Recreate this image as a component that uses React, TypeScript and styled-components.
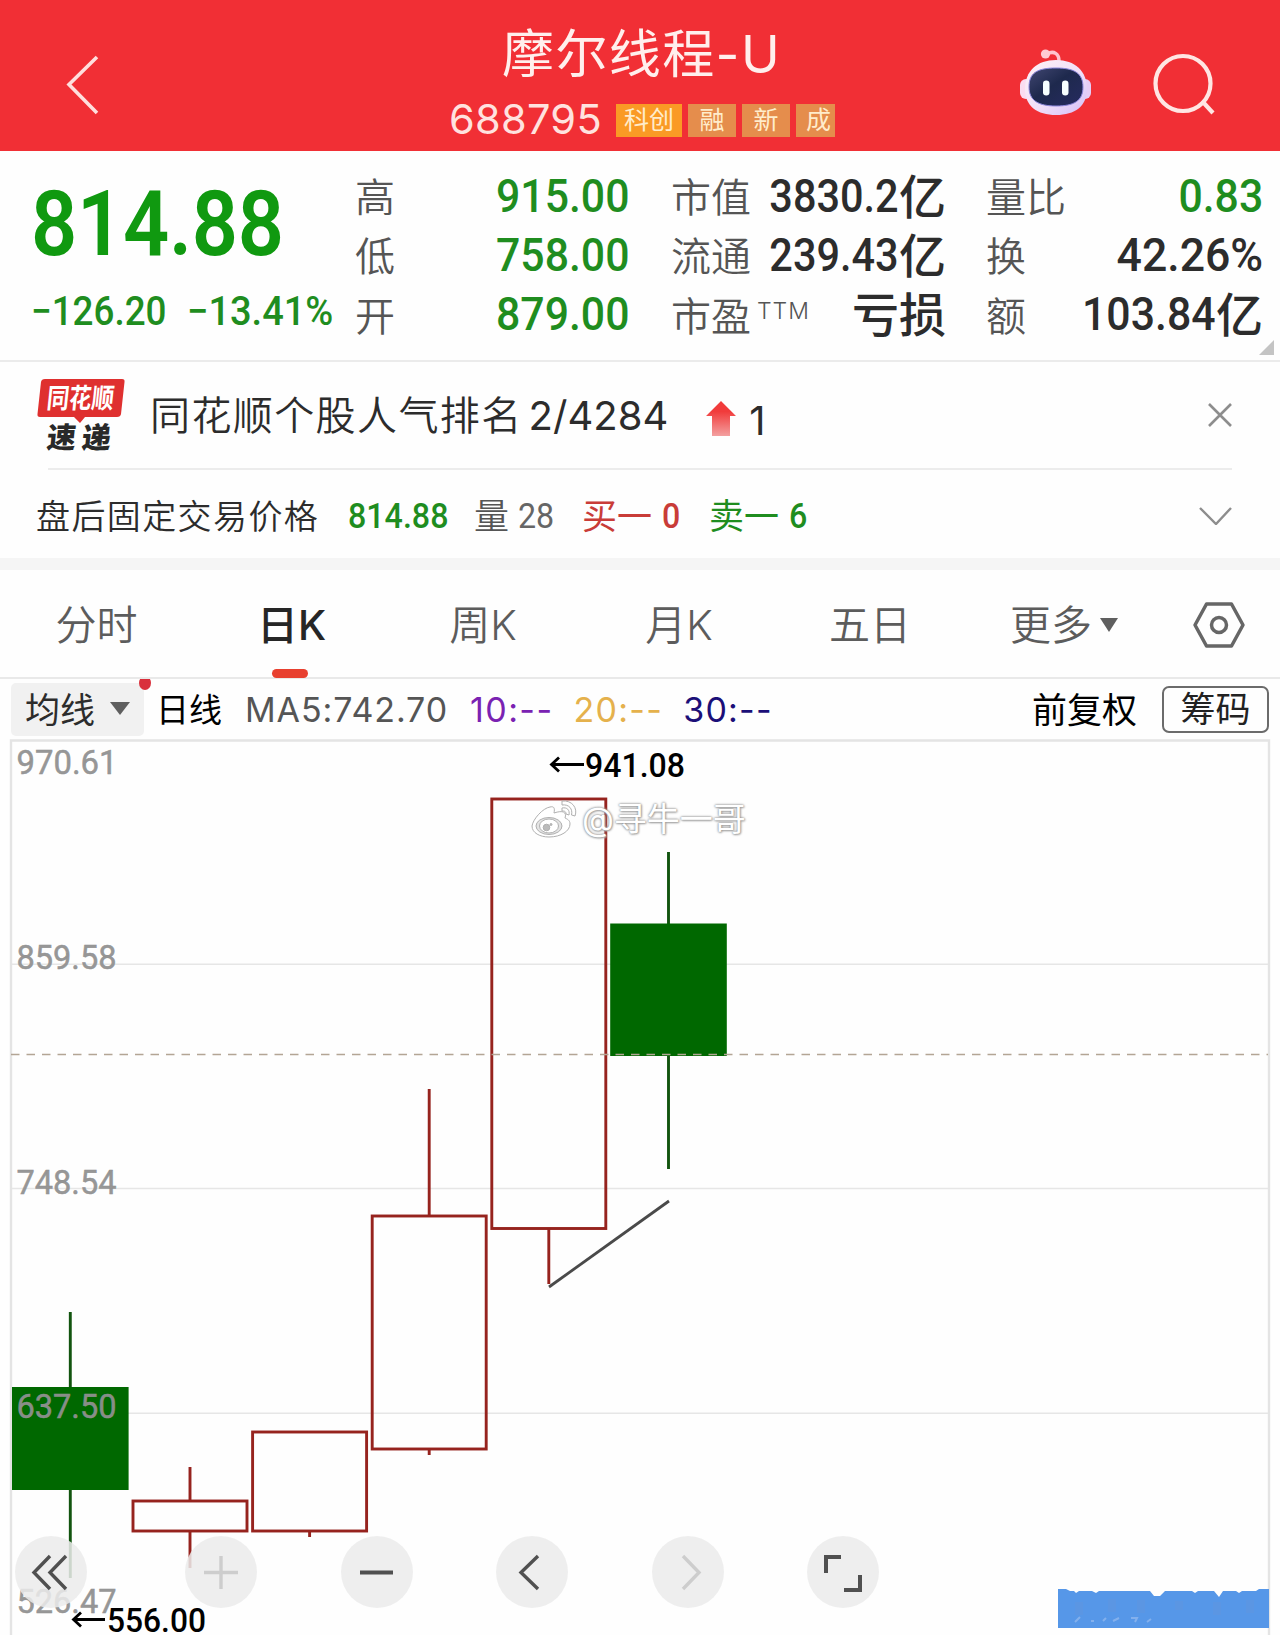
import React from "react";
import styled, { createGlobalStyle } from "styled-components";

const CJK = '"Noto Sans CJK SC", sans-serif';
const GREEN = "#1f8d1f";
const INK = "#2c2c2c";

const Global = createGlobalStyle`
  body { margin: 0; background: #fff; }
  * { box-sizing: border-box; }
`;

const Page = styled.main`
  width: 1280px;
  height: 1635px;
  overflow: hidden;
  display: flex;
  flex-direction: column;
  background: #fefefe;
  font-family: Inter, ${CJK};
  color: ${INK};
`;

const Text = styled.span<{
  $size: number; $color?: string; $weight?: number; $spacing?: number; $ml?: number; $dy?: number;
}>`
  flex: none;
  white-space: nowrap;
  font-size: ${(p) => p.$size}px;
  line-height: 1;
  font-weight: ${(p) => p.$weight ?? 400};
  color: ${(p) => p.$color ?? INK};
  letter-spacing: ${(p) => p.$spacing ?? 0}px;
  margin-left: ${(p) => p.$ml ?? 0}px;
  margin-top: ${(p) => p.$dy ?? 0}px;
`;

/* Narrow figures used for every price on the page. */
const Figure = styled(Text)<{ $squeeze?: number; $end?: boolean }>`
  font-family: Roboto, ${CJK};
  font-weight: ${(p) => p.$weight ?? 500};
  transform: scaleX(${(p) => p.$squeeze ?? 0.92});
  transform-origin: ${(p) => (p.$end ? "right" : "left")} center;
`;

/* ---------- header ---------- */
const Header = styled.header`
  flex: none;
  height: 151px;
  background: #f12f35;
  display: grid;
  grid-template-columns: 440px 404px 436px;
`;
const HeaderSide = styled.div`
  display: flex;
  padding: 48px 0 0 64px;
`;
const HeaderTools = styled.div`
  display: flex;
  align-items: flex-start;
  padding: 48px 0 0 174px;
  gap: 53px;
`;
const Heading = styled.div`
  display: flex;
  flex-direction: column;
  padding-top: 28px;
`;
const Title = styled.h1`
  margin: 0 0 0 62px;
  height: 54px;
  line-height: 54px;
  font-size: 52px;
  font-weight: 400;
  letter-spacing: 1.4px;
  color: #ffefed;
  white-space: nowrap;
`;
const CodeRow = styled.div`
  display: flex;
  align-items: center;
  height: 34px;
  margin-top: 21px;
  padding-left: 9px;
`;
const Code = styled.span`
  width: 167px;
  margin-top: -2px;
  font-size: 41.5px;
  line-height: 34px;
  font-weight: 400;
  letter-spacing: 0.3px;
  color: #ffe2df;
`;
const Tag = styled.span<{ $w: number; $bright?: boolean; $cut?: boolean }>`
  flex: none;
  width: ${(p) => p.$w}px;
  height: 33px;
  margin-right: 6px;
  padding-left: ${(p) => (p.$cut ? 10 : 0)}px;
  display: flex;
  align-items: center;
  justify-content: ${(p) => (p.$cut ? "flex-start" : "center")};
  font-size: 25px;
  line-height: 33px;
  color: #ffeccb;
  background: ${(p) => (p.$bright ? "#fa9a25" : "#e58d4c")};
`;

/* ---------- quote ---------- */
const Quote = styled.section`
  flex: none;
  position: relative;
  height: 211px;
  display: grid;
  grid-template-columns: 324px 275px 275px 277px;
  padding: 17px 0 0 31px;
  border-bottom: 2px solid #ebebeb;
`;
const PriceBlock = styled.div`
  display: flex;
  flex-direction: column;
`;
const ChangeRow = styled.div`
  display: flex;
  margin-top: 22px;
`;
const Change = styled.div<{ $w: number }>`
  width: ${(p) => p.$w}px;
  display: flex;
`;
const Stats = styled.div<{ $ml: number }>`
  display: flex;
  flex-direction: column;
  transform: translateX(${(p) => p.$ml}px);
`;
const Stat = styled.div`
  height: 59.3px;
  display: flex;
  align-items: center;
  justify-content: space-between;
`;
const Label = styled.span`
  font-size: 40px;
  line-height: 59px;
  font-weight: 350;
  color: #555;
  white-space: nowrap;
  sup { font-size: 23px; line-height: 0; vertical-align: 12px; margin-left: 6px; letter-spacing: 1px; }
`;
const Value = styled.span`
  display: flex;
  align-items: center;
`;
const Corner = styled.i`
  position: absolute;
  right: 6px;
  bottom: 5px;
  border-style: solid;
  border-width: 0 0 15px 15px;
  border-color: transparent transparent #c4c4c4 transparent;
`;

/* ---------- notices ---------- */
const Notice = styled.section`
  flex: none;
  height: 108px;
  display: flex;
  align-items: center;
  margin: 0 48px 0 37px;
  padding-bottom: 2px;
  position: relative;
  &::after {
    content: "";
    position: absolute;
    left: 11px; right: 0; bottom: 0;
    height: 2px;
    background: #ececec;
  }
`;
const Brand = styled.div`
  flex: none;
  width: 113px;
  height: 75px;
`;
const AfterHours = styled.section`
  flex: none;
  height: 88px;
  padding: 0 48px 0 36px;
  display: flex;
  align-items: center;
`;
const Cell = styled.div<{ $w: number; $gap?: number }>`
  flex: none;
  width: ${(p) => p.$w}px;
  display: flex;
  align-items: center;
  gap: ${(p) => p.$gap ?? 0}px;
  padding-top: 4px;
`;
const Push = styled.div`
  margin-left: auto;
  display: flex;
`;
const Band = styled.div`
  flex: none;
  height: 12px;
  background: #f5f5f5;
`;

/* ---------- tabs ---------- */
const Tabs = styled.nav`
  flex: none;
  height: 109px;
  display: grid;
  grid-template-columns: 193px 197px 186px 206px 176px 212px 98px;
  border-bottom: 2px solid #e9e9e9;
`;
const Tab = styled.div<{ $on?: boolean }>`
  position: relative;
  display: flex;
  align-items: center;
  justify-content: center;
  font-size: 41px;
  line-height: 1;
  padding-top: 4px;
  white-space: nowrap;
  font-weight: ${(p) => (p.$on ? 500 : 350)};
  color: ${(p) => (p.$on ? "#262626" : "#5c5c5c")};
  &::after {
    content: "";
    display: ${(p) => (p.$on ? "block" : "none")};
    position: absolute;
    left: 79px;
    bottom: -1px;
    width: 36px;
    height: 9px;
    border-radius: 5px;
    background: #e8402f;
  }
`;
const Caret = styled.i<{ $w: number; $h: number; $ml: number }>`
  width: 0;
  height: 0;
  margin-left: ${(p) => p.$ml}px;
  margin-top: -2px;
  border-left: ${(p) => p.$w / 2}px solid transparent;
  border-right: ${(p) => p.$w / 2}px solid transparent;
  border-top: ${(p) => p.$h}px solid #5f5f5f;
`;

/* ---------- indicator bar ---------- */
const Indicators = styled.section`
  flex: none;
  height: 60px;
  padding: 1px 11px 0 11px;
  display: flex;
  align-items: center;
  overflow: hidden;
`;
const Picker = styled.div`
  position: relative;
  width: 133px;
  height: 53px;
  border-radius: 5px;
  background: #f1f1f1;
  display: flex;
  align-items: center;
  padding-left: 14px;
  margin-right: 12px;
`;
const Dot = styled.i`
  position: absolute;
  right: -7px;
  top: -7px;
  width: 12px;
  height: 14px;
  border-radius: 50%;
  background: #d9303c;
`;
const Chips = styled.div`
  width: 107px;
  height: 47px;
  border: 2px solid #6b6b6b;
  border-radius: 7px;
  display: flex;
  align-items: center;
  justify-content: center;
  margin-left: 25px;
`;

/* ---------- chart ---------- */
const ChartArea = styled.section`
  position: relative;
  flex: none;
  height: 896px;
`;
const Controls = styled.div`
  position: absolute;
  left: 15px;
  top: 797px;
  display: flex;
  gap: 83.4px;
`;
const Control = styled.button<{ $first?: boolean }>`
  width: 72px;
  height: 72px;
  padding: 0;
  border: 0;
  border-radius: 50%;
  background: rgba(235, 235, 235, 0.86);
  margin-right: ${(p) => (p.$first ? 15 : 0)}px;
  svg { display: block; }
`;
const Watermark = styled.div`
  position: absolute;
  left: 531px;
  top: 60px;
  height: 40px;
  display: flex;
  align-items: center;
  gap: 4px;
  font-size: 33px;
  line-height: 40px;
  color: #fff;
  white-space: nowrap;
  text-shadow: 0 0 2px #888, 0 0 3px #aaa, 1px 1px 2px #bbb;
`;

type Candle = { x: number; open: number; close: number; high: number; low: number; up: boolean };
const candles: Candle[] = [
  { x: 70.3, open: 1387, close: 1490, high: 1312, low: 1578, up: false },
  { x: 190, open: 1501, close: 1531, high: 1467, low: 1568, up: true },
  { x: 309.6, open: 1432, close: 1531, high: 1432, low: 1537, up: true },
  { x: 429.2, open: 1216, close: 1449, high: 1089, low: 1455, up: true },
  { x: 548.8, open: 799, close: 1228.5, high: 799, low: 1284, up: true },
  { x: 668.5, open: 923.5, close: 1056, high: 852, low: 1169, up: false },
];
const scale: [string, number, number][] = [
  ["970.61", 774, 101], ["859.58", 969, 100], ["748.54", 1194, 100], ["637.50", 1418, 100], ["526.47", 1613, 100],
];

const Chart = () => (
  <svg width="1280" height="896" viewBox="0 739 1280 896" fill="none" style={{ display: "block" }}>
    <path d="M11 1635V740.5H1269V1635" stroke="#e4e4e4" strokeWidth="2.4" />
    {[964.3, 1188.5, 1413.3].map((y) => (
      <path key={y} d={`M12 ${y}H1268`} stroke="#e6e6e6" strokeWidth="1.6" />
    ))}
    {candles.map((c) =>
      c.up ? (
        <g key={c.x} stroke="#96231e" strokeWidth="2.9">
          <rect x={c.x - 57} y={c.open} width="114" height={c.close - c.open} />
          <path d={`M${c.x} ${c.high}V${c.open}M${c.x} ${c.close}V${c.low}`} />
        </g>
      ) : (
        <g key={c.x}>
          <path d={`M${c.x} ${c.high}V${c.low}`} stroke="#12540f" strokeWidth="2.9" />
          <rect x={c.x - 58.3} y={c.open} width="116.6" height={c.close - c.open} fill="#006800" />
        </g>
      )
    )}
    <path d="M11 1054.5H1268" stroke="#b3a595" strokeWidth="1.5" strokeDasharray="8.5 7" />
    <path d="M549 1287L669 1201" stroke="#4a4a4a" strokeWidth="2.8" />
    <g fontFamily="Roboto, sans-serif" fontSize="34">
      {scale.map(([t, y, w]) => (
        <text key={t} x="16.5" y={y} fill="#919191" fillOpacity="0.95" stroke="#919191" strokeWidth="0.5" textLength={w} lengthAdjust="spacingAndGlyphs">{t}</text>
      ))}
      <g fill="#000" fontWeight="500">
        <text x="585" y="777" textLength="100" lengthAdjust="spacingAndGlyphs">941.08</text>
        <text x="107" y="1631.500" textLength="99" lengthAdjust="spacingAndGlyphs">556.00</text>
      </g>
    </g>
    <g stroke="#000" strokeWidth="2.8">
      <path d="M584 764.5H552M559 757.5L551.5 764.5L559 771.5" />
      <path d="M105 1619.5H74M81 1612.5L73.5 1619.5L81 1626.5" />
    </g>
    <path d="M1058 1589H1066L1070 1591H1074L1076 1593L1079 1591H1092L1096 1593L1099 1591H1150L1154 1596H1160L1165 1591H1192L1195 1593L1198 1591H1214L1219 1597L1223 1591H1236L1239 1593L1242 1591H1256L1259 1589H1269V1628H1058Z" fill="#5697e8" />
    <g stroke="#8eb7ed" strokeWidth="2" opacity="0.8">
      <path d="M1075 1622l5-5M1091 1621h3M1103 1621l3-3M1113 1621l6-3M1131 1618h6l-2 4M1147 1622l4-3" />
    </g>
    <g stroke="#7598d3" strokeWidth="8" opacity="0.2">
      <path d="M1079 1602v13M1112 1599v13M1141 1600v13M1179 1601v9M1217 1602v13M1250 1600v13" />
    </g>
  </svg>
);

const icons: Record<string, React.ReactNode> = {
  rewind: <path d="M35 20L19 36.5L35 53M51 20L35 36.5L51 53" />,
  plus: <path d="M19 36.500H53M36 20V53" />,
  minus: <path d="M19 36.500H52" strokeWidth="4" />,
  prev: <path d="M42 20L25 36.5L42 53" />,
  next: <path d="M31 20L47 36.5L31 53" />,
  expand: <path d="M19 37V21H34M37 54H53V39" strokeWidth="4" />,
};

const Robot = () => (
  <svg width="78" height="72" viewBox="0 0 78 72" fill="none">
    <defs>
      <linearGradient id="shell" x1="0" y1="0" x2="1" y2="1">
        <stop offset="0" stopColor="#fff2f7" /><stop offset=".55" stopColor="#f1dff8" /><stop offset="1" stopColor="#d3bff8" />
      </linearGradient>
      <linearGradient id="visor" x1="0" y1="0" x2="1" y2="1">
        <stop offset="0" stopColor="#414772" /><stop offset=".45" stopColor="#1e294d" /><stop offset="1" stopColor="#262b60" />
      </linearGradient>
    </defs>
    <path d="M29 6c7-4 12 0 12 7" stroke="#ffc4cc" strokeWidth="3.5" />
    <circle cx="27.500" cy="6" r="4.600" fill="#ffcbd2" />
    <rect x="2" y="31" width="12" height="20" rx="6" fill="#fbdcf0" />
    <rect x="61" y="31" width="12" height="20" rx="6" fill="#e6cdf6" />
    <path d="M38 12C19 12 7 23 7 41C7 58 19 67 38 67C57 67 69 58 69 41C69 23 57 12 38 12Z" fill="url(#shell)" />
    <path d="M38 20C19 20 11 25 11 39C11 53 21 58 38 58C56 58 65 53 65 39C65 25 56 20 38 20Z" fill="url(#visor)" stroke="#8b86dc" strokeWidth="1" />
    <rect x="25" y="32.500" width="6.500" height="15" rx="3.200" fill="#f7ffff" />
    <rect x="44" y="32.500" width="6.500" height="15" rx="3.200" fill="#f7ffff" />
  </svg>
);

const BrandLogo = () => (
  <svg width="92" height="75" viewBox="0 0 92 75" overflow="visible" fontFamily='"Noto Sans CJK SC", sans-serif' fontWeight="900">
    <path d="M8 1H85Q88 1 87.500 4L84 36Q83.500 39 80 39H48L43 45L37 39H3Q0 39 .5 36L4 4Q4.500 1 8 1Z" fill="#df302f" />
    <text transform="translate(9 30) skewX(-6) scale(1 1.1)" fontSize="25" fontWeight="700" fill="#fff" textLength="67" lengthAdjust="spacingAndGlyphs">同花顺</text>
    <text transform="translate(9 70) skewX(-6)" fontSize="29" fill="#292929" textLength="64" lengthAdjust="spacing">速递</text>
  </svg>
);

const WeiboMark = () => (
  <svg width="47" height="40" viewBox="0 0 47 40" fill="#fff" stroke="#b0b0b0" strokeWidth="1">
    <path d="M19 8C12 9 2 20 1 27C1 34 9 38 18 38C30 38 39 32 39 25C39 21 36 20 34 19C36 13 32 11 23 14C24 9 23 7 19 8Z" />
    <ellipse cx="18" cy="27" rx="13" ry="8.500" fill="#e4e4e4" />
    <ellipse cx="18" cy="27" rx="9.500" ry="7" />
    <circle cx="15.500" cy="28.500" r="3.300" fill="#bbb" />
    <circle cx="20" cy="25.500" r="1" fill="#bbb" />
    <path d="M31 2C41 1 47 9 44 17L40.500 16C42 10 38 5 31 6ZM31 9C36 8 39 11 38 16L35 15C35 12 33 12 31 12Z" />
  </svg>
);

const highs = [["高", "915.00"], ["低", "758.00"], ["开", "879.00"]];
const caps = [["市值", "3830.2", "亿"], ["流通", "239.43", "亿"]];

const Amount = ({ n, unit, color = INK, squeeze = 0.93 }: { n: string; unit?: string; color?: string; squeeze?: number }) => (
  <Value>
    <Figure $size={46} $color={color} $squeeze={squeeze} $dy={-4} $end>{n}</Figure>
    {unit && <Text $size={47} $weight={500} $dy={-3}>{unit}</Text>}
  </Value>
);

export default function App() {
  return (
    <Page>
      <Global />
      <Header>
        <HeaderSide>
          <svg width="40" height="72" fill="none"><path d="M33 9L5 36.500L33 65" stroke="#ffdfdd" strokeWidth="3.600" /></svg>
        </HeaderSide>
        <Heading>
          <Title>摩尔线程-U</Title>
          <CodeRow>
            <Code>688795</Code>
            <Tag $w={66} $bright>科创</Tag>
            <Tag $w={48}>融</Tag>
            <Tag $w={48}>新</Tag>
            <Tag $w={39} $cut>成</Tag>
          </CodeRow>
        </Heading>
        <HeaderTools>
          <Robot />
          <svg width="72" height="72" fill="none" stroke="#ffe6e3" strokeWidth="4.200">
            <circle cx="34" cy="35.500" r="27.500" /><path d="M53 53L64 65" />
          </svg>
        </HeaderTools>
      </Header>

      <Quote>
        <PriceBlock>
          <Figure $size={90} $color="#109910" $weight={600} $squeeze={0.9} $dy={12} $spacing={-0.3}>814.88</Figure>
          <ChangeRow>
            <Change $w={156}><Figure $size={40} $color={GREEN}>−126.20</Figure></Change>
            <Change $w={150}><Figure $size={40} $color={GREEN} $squeeze={0.95}>−13.41%</Figure></Change>
          </ChangeRow>
        </PriceBlock>
        <Stats $ml={0}>
          {highs.map(([k, v]) => (
            <Stat key={k}><Label>{k}</Label><Amount n={v} color={GREEN} /></Stat>
          ))}
        </Stats>
        <Stats $ml={41}>
          {caps.map(([k, v, u]) => (
            <Stat key={k}><Label>{k}</Label><Amount n={v} unit={u} squeeze={0.9} /></Stat>
          ))}
          <Stat><Label>市盈<sup>TTM</sup></Label><Text $size={47} $weight={500} $dy={-3}>亏损</Text></Stat>
        </Stats>
        <Stats $ml={81}>
          <Stat><Label>量比</Label><Amount n="0.83" color={GREEN} /></Stat>
          <Stat><Label>换</Label><Amount n="42.26%" squeeze={0.97} /></Stat>
          <Stat><Label>额</Label><Amount n="103.84" unit="亿" /></Stat>
        </Stats>
        <Corner />
      </Quote>

      <Notice>
        <Brand><BrandLogo /></Brand>
        <Text $size={40} $spacing={1.4} $weight={350} $dy={2}>同花顺个股人气排名</Text>
        <Text $size={40} $weight={400} $ml={6} $dy={1}>2/4284</Text>
        <svg width="32" height="38" style={{ marginLeft: 37, marginTop: 8 }}>
          <defs><linearGradient id="rise" x1="0" y1="0" x2="0" y2="1"><stop offset=".3" stopColor="#f13b3b" /><stop offset="1" stopColor="#f3a0a0" /></linearGradient></defs>
          <path d="M16 1L31 16H25V36H7V16H1Z" fill="url(#rise)" />
        </svg>
        <Text $size={40} $weight={400} $ml={12} $dy={11}>1</Text>
        <Push>
          <svg width="26" height="26" fill="none" stroke="#8d8d8d" strokeWidth="2.600"><path d="M3 2L25 24M25 2L3 24" /></svg>
        </Push>
      </Notice>

      <AfterHours>
        <Cell $w={312}><Text $size={34} $weight={350} $spacing={1.4} $dy={2}>盘后固定交易价格</Text></Cell>
        <Cell $w={126}><Figure $size={35} $color={GREEN}>814.88</Figure></Cell>
        <Cell $w={108} $gap={9}><Text $size={35} $weight={350} $color="#555">量</Text><Figure $size={35} $color="#666" $weight={400}>28</Figure></Cell>
        <Cell $w={127} $gap={10}><Text $size={35} $color="#c93c38">买一</Text><Figure $size={35} $color="#c93c38">0</Figure></Cell>
        <Cell $w={110} $gap={10}><Text $size={35} $color={GREEN}>卖一</Text><Figure $size={35} $color={GREEN}>6</Figure></Cell>
        <Push><svg width="34" height="22" fill="none"><path d="M2 5L18 21L33 5" stroke="#8d8d8d" strokeWidth="2.400" /></svg></Push>
      </AfterHours>
      <Band />

      <Tabs>
        <Tab>分时</Tab>
        <Tab $on>日K</Tab>
        <Tab>周K</Tab>
        <Tab>月K</Tab>
        <Tab>五日</Tab>
        <Tab>更多<Caret $w={19} $h={14} $ml={8} /></Tab>
        <Tab>
          <svg width="54" height="48" fill="none" stroke="#666" strokeWidth="3.500">
            <path d="M14.500 2H39.500L51 23L39.500 44H14.500L3 23Z" strokeLinejoin="round" /><circle cx="27" cy="23" r="7.500" />
          </svg>
        </Tab>
      </Tabs>

      <Indicators>
        <Picker><Text $size={35} $dy={2}>均线</Text><Caret $w={20} $h={13} $ml={15} /><Dot /></Picker>
        <Text $size={33} $color="#000" $dy={2}>日线</Text>
        <Text $size={34} $color="#555" $ml={23} $spacing={0.9}>MA5:742.70</Text>
        <Text $size={34} $color="#7a22b2" $ml={22} $spacing={1.4}>10:--</Text>
        <Text $size={34} $color="#e5b14c" $ml={20} $spacing={1.3}>20:--</Text>
        <Text $size={34} $color="#1b0f78" $ml={20} $spacing={1.2}>30:--</Text>
        <Push>
          <Text $size={35} $color="#000" $dy={7}>前复权</Text>
          <Chips><Text $size={35} $color="#222" $dy={-1}>筹码</Text></Chips>
        </Push>
      </Indicators>

      <ChartArea>
        <Chart />
        <Watermark><WeiboMark />@寻牛一哥</Watermark>
        <Controls>
          {Object.keys(icons).map((k) => (
            <Control key={k} $first={k === "rewind"} aria-label={k}>
              <svg width="72" height="72" fill="none" strokeWidth="3.400" stroke={k === "plus" || k === "next" ? "#cdcdcd" : "#505050"}>{icons[k]}</svg>
            </Control>
          ))}
        </Controls>
      </ChartArea>
    </Page>
  );
}
